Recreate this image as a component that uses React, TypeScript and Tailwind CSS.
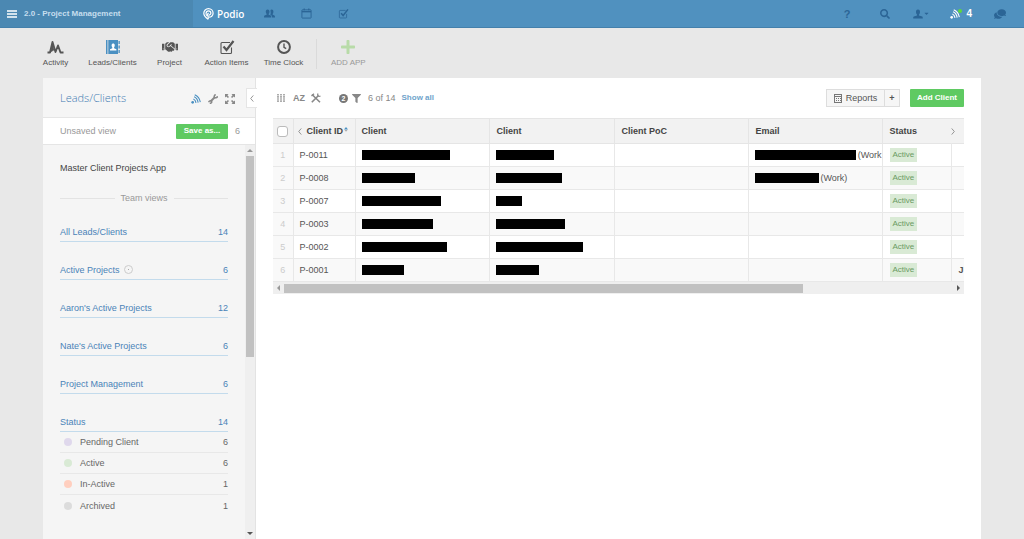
import React from 'react';
import { FaSearch, FaComments, FaHandshake, FaFilter, FaPlus, FaCaretDown } from 'react-icons/fa';

const apps = [
  { label: 'Activity', icon: 'activity' },
  { label: 'Leads/Clients', icon: 'contacts' },
  { label: 'Project', icon: 'handshake' },
  { label: 'Action Items', icon: 'check' },
  { label: 'Time Clock', icon: 'clock' },
];

const teamViews = [
  { label: 'All Leads/Clients', count: 14 },
  { label: 'Active Projects', count: 6, info: true },
  { label: "Aaron's Active Projects", count: 12 },
  { label: "Nate's Active Projects", count: 6 },
  { label: 'Project Management', count: 6 },
  { label: 'Status', count: 14 },
];

const statuses = [
  { label: 'Pending Client', count: 6, dot: 'bg-[#dfd8ec]' },
  { label: 'Active', count: 6, dot: 'bg-[#d9ead5]' },
  { label: 'In-Active', count: 1, dot: 'bg-[#ffcfbf]' },
  { label: 'Archived', count: 1, dot: 'bg-[#dcdcdc]' },
];

// client, contact and email hold the width of the redacted value
const rows = [
  { id: 'P-0011', client: 88, contact: 58, email: 102, type: '(Work', next: '' },
  { id: 'P-0008', client: 53, contact: 66, email: 64, type: '(Work)', next: '' },
  { id: 'P-0007', client: 79, contact: 26, email: 0, type: '', next: '' },
  { id: 'P-0003', client: 71, contact: 69, email: 0, type: '', next: '' },
  { id: 'P-0002', client: 85, contact: 87, email: 0, type: '', next: '' },
  { id: 'P-0001', client: 42, contact: 43, email: 0, type: '', next: 'J' },
];

const CheckIcon = ({ className }: { className: string }) => (
  <svg viewBox="0 0 16 16" className={className} fill="none" stroke="currentColor">
    <path d="M12.500 8.500v5a1 1 0 0 1-1 1H3a1 1 0 0 1-1-1V4.500a1 1 0 0 1 1-1h8" strokeWidth="1.1" />
    <path d="M4.500 7.500l3 3.500L14.500 2" strokeWidth="2.200" />
  </svg>
);

const CalendarIcon = () => (
  <svg viewBox="0 0 12 12" className="size-[11px]" fill="none" stroke="currentColor">
    <rect x="1" y="2" width="10" height="9" rx="0.500" />
    <path d="M1 4h10" strokeWidth="1.500" />
    <path d="M3.500 0.500v2M8.500 0.500v2" strokeWidth="1.300" />
  </svg>
);

const PersonIcon = () => (
  <svg viewBox="0 0 10 10" className="size-2.5" fill="currentColor">
    <path d="M5 0.500C3.400 0.500 2.900 1.800 3 3.200C3.100 4.500 3.600 5.200 4 5.600V6.500L0.800 7.600C0.300 7.900 0.200 8.500 0.200 9.500H9.800C9.800 8.500 9.700 7.900 9.200 7.600L6 6.500V5.600C6.400 5.200 6.900 4.500 7 3.200C7.100 1.800 6.600 0.500 5 0.500z" />
  </svg>
);

const PeopleIcon = () => (
  <svg viewBox="0 0 11 9" className="h-[9px] w-[11px]" fill="currentColor">
    <path d="M7.700 0.500C9 0.500 9.500 1.600 9.400 2.900C9.300 3.900 9 4.500 8.700 4.800V5.800L10.500 6.600C10.900 6.900 11 7.500 11 8.500H8C8 7 7.800 6.300 6.300 5.700C6.700 5 7 3.500 6.400 1.400C6.600 0.800 7 0.500 7.700 0.500z" />
    <path d="M3.600 0.500C2.300 0.500 1.700 1.600 1.800 2.900C1.900 3.900 2.200 4.500 2.600 4.800V5.800L0.500 6.600C0.100 6.900 0 7.500 0 8.500H7.300C7.300 7.500 7.200 6.900 6.800 6.600L4.700 5.800V4.800C5 4.500 5.400 3.900 5.500 2.900C5.600 1.600 5 0.500 3.600 0.500z" />
  </svg>
);

const FeedIcon = ({ className }: { className: string }) => (
  <svg viewBox="0 0 12 12" className={className} fill="none" stroke="currentColor" strokeWidth="1.300">
    <path d="M4.500 0.800C8 2.300 10.500 5.500 11.200 9.800" />
    <path d="M3.700 3.400C6.200 4.300 8 6.700 8.600 10.300" />
    <path d="M2.900 5.900C4.500 6.600 5.700 8 6 10.600" />
    <circle cx="2" cy="10" r="1.600" fill="currentColor" stroke="none" />
  </svg>
);

const AppIcon = ({ name }: { name: string }) => {
  switch (name) {
    case 'activity':
      return (
        <svg viewBox="0 0 17 14" className="h-3.5 w-[17px]" fill="none" stroke="currentColor" strokeWidth="1.900" strokeLinejoin="round">
          <path d="M0.500 12.500H3L5.500 2L8.500 12L11 5.500L13.500 12.500H16.500" />
          <path d="M3.500 12L5.500 4L7 10z" fill="currentColor" strokeWidth="0.500" />
        </svg>
      );
    case 'contacts':
      return (
        <svg viewBox="0 0 14 14" className="size-3.5" fill="currentColor">
          <path d="M0 0h1.500v14H0zM2.300 0H12v14H2.300zM12.500 1h1.300v3h-1.300zM12.500 5.500h1.300v3h-1.300zM12.500 10h1.300v3h-1.300z" />
          <path d="M4 10.500V9.200l2.300-1V7.300C5.200 6 5.400 3.500 7.200 3.500S9.200 6 8.100 7.300v0.900l2.300 1v1.300z" fill="#fff" />
        </svg>
      );
    case 'handshake':
      return <FaHandshake className="size-4" />;
    case 'check':
      return <CheckIcon className="size-4" />;
    default:
      return (
        <svg viewBox="0 0 14 14" className="size-3.5" fill="none" stroke="currentColor">
          <circle cx="7" cy="7" r="5.900" strokeWidth="2" />
          <path d="M7 3.500V7.300L9.200 8.600" strokeWidth="1.400" />
        </svg>
      );
  }
};

const TopBar = () => (
  <header className="flex h-7 items-center border-b border-[#4480ab] bg-[#5091bf] text-[#2b6596]">
    <div className="flex h-full w-[193px] items-center gap-[7px] bg-[#4b88b2] pl-[7px]">
      <button aria-label="Menu" className="text-white">
        <svg viewBox="0 0 10 8" className="h-2 w-2.5" stroke="currentColor" strokeWidth="1.500">
          <path d="M0 1h10M0 4h10M0 7h10" />
        </svg>
      </button>
      <a href="#" className="text-[8px] font-bold text-[#c6deee]">2.0 - Project Management</a>
    </div>
    <a href="#" className="ml-2.5 flex items-center gap-[3px] font-['Open_Sans',sans-serif] text-[10px] font-semibold text-white">
      <svg viewBox="0 0 11 12" className="h-3 w-[11px]" fill="none" stroke="currentColor" strokeWidth="1.200">
        <path d="M5.200 11.300C2.500 9.500 0.800 7.600 0.800 5.300a4.600 4.600 0 0 1 9.300 0C10.100 7.700 8 9.300 5.800 9.200" />
        <path d="M4.500 8.200C2.300 7 2.500 2.900 5.500 2.900C8.500 2.900 8.700 7.100 5.700 7.100" />
        <path d="M5.200 11.300V8.500C4.500 7.500 4.400 6 5.500 4.900" />
      </svg>
      Podio
    </a>
    <nav className="ml-5 flex items-center gap-[26px]">
      <button aria-label="Contacts"><PeopleIcon /></button>
      <button aria-label="Calendar"><CalendarIcon /></button>
      <button aria-label="Tasks"><CheckIcon className="size-[11px]" /></button>
    </nav>
    <div className="ml-auto flex items-center pr-[18px]">
      <button aria-label="Help" className="mr-[30px] text-[11px] font-bold">?</button>
      <button aria-label="Search" className="mr-[23px]">
        <FaSearch className="size-2.5" />
      </button>
      <button aria-label="Account" className="mr-5 flex items-center">
        <PersonIcon />
        <FaCaretDown className="size-[7px]" />
      </button>
      <button className="relative mr-[22px] flex items-center gap-1.5 text-[10px] font-bold text-white">
        <FeedIcon className="size-2.5" />
        <span className="absolute top-0.5 left-2 size-1 rounded-full bg-[#5ed83c]" />
        4
      </button>
      <button aria-label="Chat"><FaComments className="size-3 -scale-x-100" /></button>
    </div>
  </header>
);

const AppNav = () => (
  <nav className="flex h-[50px] items-center pt-0.5 pl-[27px]">
    {apps.map(app => (
      <a key={app.label} href="#" className="flex w-[57px] flex-col items-center gap-0.5 whitespace-nowrap">
        <span className={`flex h-4 items-center ${app.icon === 'contacts' ? 'text-[#4a90c2]' : 'text-[#555]'}`}>
          <AppIcon name={app.icon} />
        </span>
        <span className="text-[8px] leading-3 text-[#555]">{app.label}</span>
      </a>
    ))}
    <button className="ml-1 flex h-[30px] flex-col items-center gap-0.5 border-l border-[#dadada] pl-3.5 text-[#999]">
      <FaPlus className="size-4 text-[#b8dba8]" />
      <span className="text-[8px] leading-3">ADD APP</span>
    </button>
  </nav>
);

const Sidebar = () => (
  <aside className="flex w-[213px] shrink-0 flex-col border-r border-[#e3e3e3] bg-[#f5f5f5]">
    <div className="relative flex h-10 items-center border-b border-[#e5e5e5] pl-[17px] text-[#888]">
      <h1 className="font-['Open_Sans',sans-serif] text-[11px] font-light text-[#3f7cb3]">Leads/Clients</h1>
      <div className="ml-auto flex items-center gap-[7px] pt-0.5 pr-5">
        <button aria-label="Follow" className="text-[#4a90c2]"><FeedIcon className="size-2.5" /></button>
        <button aria-label="Settings">
          <svg viewBox="0 0 10 10" className="size-2.5" fill="none" stroke="currentColor">
            <path d="M2.500 7.500L7 3" strokeWidth="1.900" />
            <path d="M0.600 8.200C1.500 6.300 3.500 6.500 3.700 7.700C3.800 8.800 2.800 9.500 1.800 9.300" strokeWidth="1.500" />
            <path d="M7.700 0.500C6 1.200 5.800 3 6.800 3.600C7.800 4.200 9.300 3.700 9.500 2.200" strokeWidth="1.500" />
          </svg>
        </button>
        <button aria-label="Expand">
          <svg viewBox="0 0 10 10" className="size-2.5" fill="currentColor">
            <path d="M0 0h3.500L2.400 1.300L4 2.900L2.900 4L1.300 2.400L0 3.500zM10 0v3.500L8.700 2.400L7.100 4L6 2.900L7.600 1.300L6.500 0zM10 10H6.500L7.600 8.700L6 7.100L7.100 6L8.700 7.600L10 6.500zM0 10V6.500L1.300 7.600L2.900 6L4 7.100L2.400 8.700L3.500 10z" />
          </svg>
        </button>
      </div>
      <button aria-label="Collapse" className="absolute top-2.5 -right-0.5 flex h-5 w-[11px] items-center justify-center border border-r-0 border-[#e5e5e5] bg-white">
        <svg viewBox="0 0 4 8" className="h-[7px] w-1" fill="none" stroke="currentColor"><path d="M3.500 0.500L0.500 4l3 3.500" /></svg>
      </button>
    </div>
    <div className="flex h-[27px] items-center border-b border-[#e5e5e5] bg-white pr-[15px] pl-[17px] text-[#999]">
      <span>Unsaved view</span>
      <button className="mr-[7px] ml-auto h-[15px] w-[52px] rounded-[1px] bg-[#5fca62] text-[8px] font-bold text-white">Save as...</button>
      <span>6</span>
    </div>
    <div className="flex grow">
      <div className="grow pr-[17px] pl-[17px]">
        <p className="pt-[17px] leading-3 text-[#444]">Master Client Projects App</p>
        <div className="mt-[18px] flex items-center gap-1.5 leading-3 text-[#999]">
          <span className="h-px grow bg-[#e3e3e3]" />
          Team views
          <span className="h-px grow bg-[#e3e3e3]" />
        </div>
        {teamViews.map(view => (
          <a key={view.label} href="#" className="flex h-[38px] items-end border-b border-[#c3dbec] pb-[3px] leading-3 text-[#4a83b8]">
            <span>{view.label}</span>
            {view.info && (
              <span className="mb-0.5 ml-1 flex size-[9px] items-center justify-center rounded-full border border-[#ccc]">
                <span className="size-px bg-[#aaa]" />
              </span>
            )}
            <span className="ml-auto">{view.count}</span>
          </a>
        ))}
        <ul className="divide-y divide-[#e8e8e8]">
          {statuses.map(status => (
            <li key={status.label} className="flex h-[21px] items-center pl-1 text-[#666]">
              <span className={`mr-2 size-2 rounded-full ${status.dot}`} />
              {status.label}
              <span className="ml-auto">{status.count}</span>
            </li>
          ))}
        </ul>
      </div>
      <div className="flex w-2.5 flex-col items-center bg-[#efefef] py-1">
        <span className="border-x-[3px] border-b-[3px] border-x-transparent border-b-[#999]" />
        <span className="mt-1 h-[201px] w-2 bg-[#c1c1c1]" />
        <span className="mt-auto border-x-[3px] border-t-[3px] border-x-transparent border-t-[#555]" />
      </div>
    </div>
  </aside>
);

const Toolbar = () => (
  <div className="flex h-10 items-center text-[#888]">
    <button aria-label="Layout" className="ml-1">
      <svg viewBox="0 0 8 8" className="size-2" fill="none" stroke="#aaa" strokeWidth="1.900">
        <path d="M1 0v8M4 0v8M7 0v8" strokeDasharray="1.600 0.500" />
      </svg>
    </button>
    <button className="ml-2 font-bold">AZ</button>
    <button aria-label="Tools" className="ml-1.5">
      <svg viewBox="0 0 10 10" className="size-2.5" fill="none" stroke="currentColor" strokeWidth="1.600">
        <path d="M1 1.500L9 9.300M0.800 9.300L7.500 2.500" />
        <path d="M7 0.500C6 2.500 7.500 4 9.500 3M0.500 3L3 0.700" strokeWidth="1.300" />
      </svg>
    </button>
    <button aria-label="2 filters" className="ml-[18px] flex items-center gap-1">
      <span className="size-[9px] rounded-full bg-[#777] text-center text-[7px] leading-[9px] font-bold text-white">2</span>
      <FaFilter className="size-[9px]" />
    </button>
    <span className="ml-[7px] text-[#888]">6 of 14</span>
    <a href="#" className="ml-1.5 text-[8px] font-bold text-[#6fa3cb]">Show all</a>
    <div className="ml-auto flex h-[18px] border border-[#ddd] bg-[#f6f6f6] text-[#555]">
      <button className="flex w-[57px] items-center justify-center gap-1">
        <svg viewBox="0 0 8 9" className="h-[9px] w-2" fill="none" stroke="#777">
          <rect x="0.500" y="0.500" width="7" height="8" />
          <path d="M1 2.500h6M2 4.500h1M4 4.500h1M6 4.500h1M2 6.500h1M4 6.500h1M6 6.500h1" />
        </svg>
        Reports
      </button>
      <button className="w-[15px] border-l border-[#ddd] font-bold">+</button>
    </div>
    <button className="ml-2.5 h-[18px] w-[54px] rounded-[1px] bg-[#5fca62] text-[8px] font-bold text-white">Add Client</button>
  </div>
);

const Redacted = ({ width }: { width: number }) => (
  <span className="block h-2.5 bg-black" style={{ width }} />
);

const ClientTable = () => (
  <div className="overflow-hidden">
    <table className="w-[753px] table-fixed border-collapse text-left leading-3 whitespace-nowrap text-[#555]">
      <thead>
        <tr className="h-[25px] border-y border-[#e5e5e5] bg-[#f2f2f2] text-[#444] *:border-r *:border-[#e5e5e5]">
          <th className="w-5 px-1">
            <input type="checkbox" aria-label="Select all" className="block size-[11px] appearance-none rounded-[3px] border border-[#bbb] bg-white" />
          </th>
          <th className="w-[62px] pl-1">
            <span className="flex items-center">
              <svg viewBox="0 0 4 8" className="mr-[5px] h-[7px] w-1" fill="none" stroke="#888"><path d="M3.500 0.500L0.500 4l3 3.500" /></svg>
              Client ID
              <svg viewBox="0 0 4 5" className="mb-1 ml-px h-[5px] w-1" fill="#4a90c2"><path d="M2 0l2 2.500H0z" /><path d="M0.500 3h3L2 4.800z" fill="#aaa" /></svg>
            </span>
          </th>
          <th className="w-[134px] pl-1.5">Client</th>
          <th className="w-[125px] pl-[7px]">Client</th>
          <th className="w-[134px] pl-[7px]">Client PoC</th>
          <th className="w-[134px] pl-[7px]">Email</th>
          <th className="w-[69px] border-r-0! pl-[7px]">Status</th>
          <th className="w-[75px]">
            <svg viewBox="0 0 4 8" className="h-[7px] w-1" fill="none" stroke="#888"><path d="M0.500 0.500l3 3.500l-3 3.500" /></svg>
          </th>
        </tr>
      </thead>
      <tbody>
        {rows.map((row, i) => (
          <tr key={row.id} className="h-[23px] border-b border-[#e8e8e8] even:bg-[#f9f9f9] *:border-r *:border-[#e8e8e8]">
            <td className="bg-[#f9f9f9] text-center text-[#ccc]">{i + 1}</td>
            <td className="pl-1.5">{row.id}</td>
            <td className="pl-1.5"><Redacted width={row.client} /></td>
            <td className="pl-1.5"><Redacted width={row.contact} /></td>
            <td />
            <td className="pl-1.5">
              {row.email > 0 && (
                <span className="flex items-center gap-0.5">
                  <Redacted width={row.email} />
                  {row.type}
                </span>
              )}
            </td>
            <td className="pl-[7px]">
              <span className="inline-block bg-[#d9ead5] px-[3px] py-px text-[8px] text-[#6a9a62]">Active</span>
            </td>
            <td className="pl-[7px] font-bold">{row.next}</td>
          </tr>
        ))}
      </tbody>
    </table>
    <div className="flex h-3 items-center bg-[#efefef] px-1">
      <span className="border-y-[3px] border-r-[3px] border-y-transparent border-r-[#999]" />
      <span className="ml-1 h-[9px] w-[76%] bg-[#c1c1c1]" />
      <span className="ml-auto border-y-[3px] border-l-[3px] border-y-transparent border-l-[#555]" />
    </div>
  </div>
);

export default function App() {
  return (
    <div className="flex min-h-screen flex-col bg-[#e8e8e8] font-['Liberation_Sans',Arial,sans-serif] text-[9px] leading-[14px]">
      <TopBar />
      <AppNav />
      <div className="mx-[43px] flex grow bg-white">
        <Sidebar />
        <main className="min-w-0 grow px-[17px]">
          <Toolbar />
          <ClientTable />
        </main>
      </div>
    </div>
  );
}
